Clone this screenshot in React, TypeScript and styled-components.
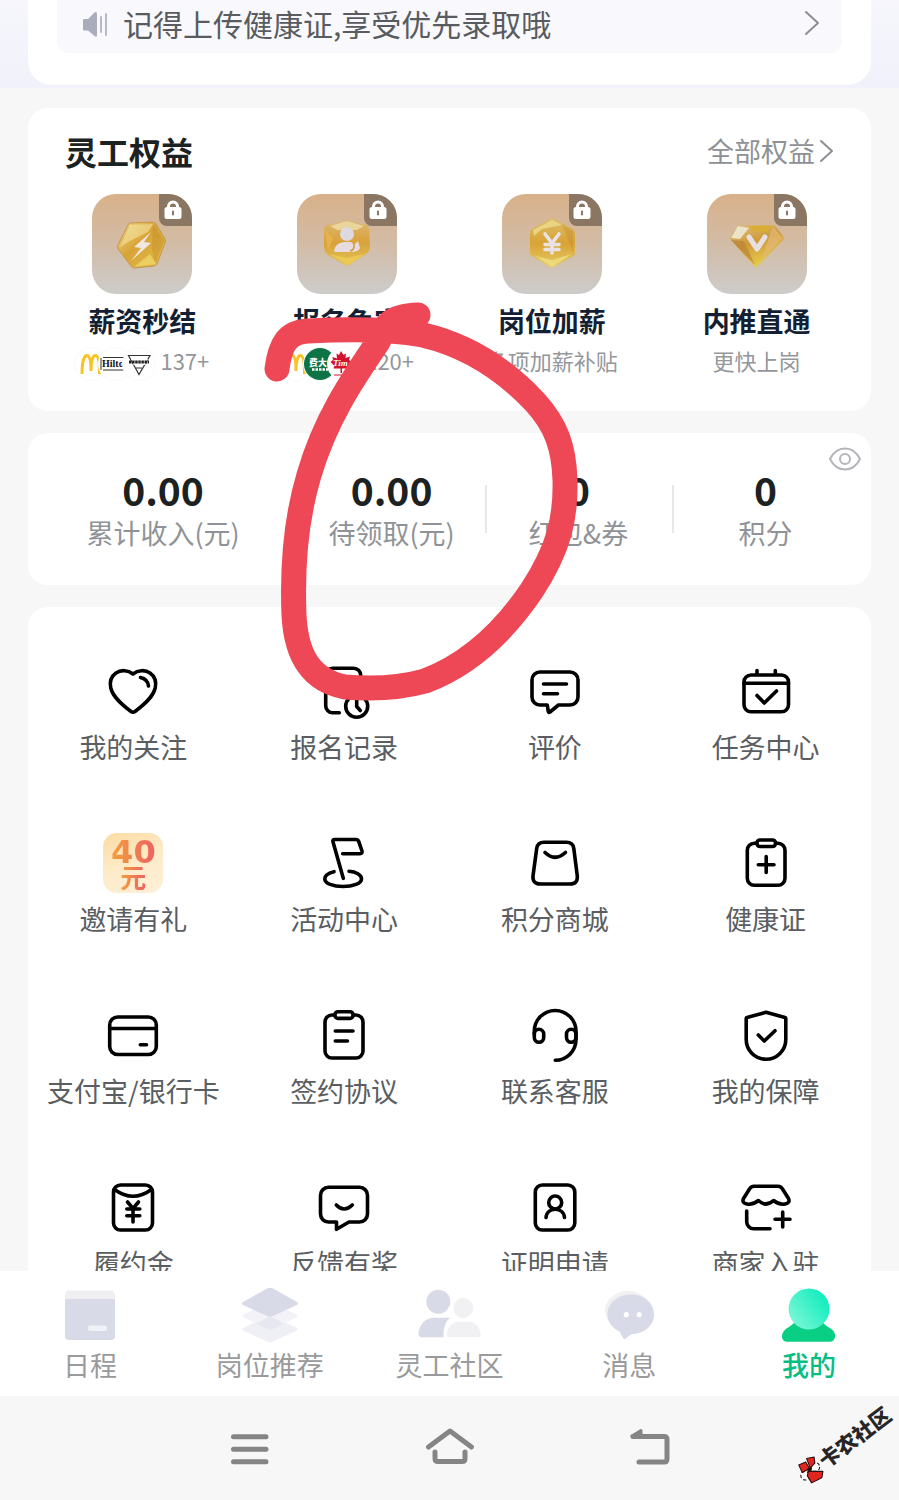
import React from "react";
import styled, { createGlobalStyle } from "styled-components";

const GlobalStyle = createGlobalStyle`
  *, *::before, *::after { box-sizing: border-box; }
  body {
    margin: 0;
    background: #f7f7f7;
    color: #1c2122;
    font-family: "Noto Sans CJK SC", "Noto Sans", sans-serif;
  }
  button {
    margin: 0;
    padding: 0;
    border: 0;
    background: none;
    color: inherit;
    font: inherit;
    cursor: pointer;
  }
  a { color: inherit; text-decoration: none; }
  h2, h3, p, ul, dl, dd { margin: 0; padding: 0; }
  ul { list-style: none; }
  svg { display: block; flex: none; }
`;

const Shell = styled.div`
  display: flex;
  flex-direction: column;
  height: 100vh;
`;

const Content = styled.main`
  position: relative;
  flex: 1;
  min-height: 0;
  overflow-x: hidden;
  overflow-y: auto;
  scrollbar-width: none;
`;

const Hero = styled.header`
  padding: 0 28px 3px;
  background: linear-gradient(#f6f6fc, #f1f1fb);
`;

const HeroCard = styled.div`
  padding: 0 29px 32px;
  border-radius: 0 0 24px 24px;
  background: #fff;
`;

const Notice = styled.a`
  display: flex;
  align-items: center;
  gap: 12px;
  height: 53px;
  padding: 0 22px 8px;
  border-radius: 0 0 12px 12px;
  background: #f9f9fd;
  color: #585c60;
  font-size: 30px;
  line-height: 40px;
`;

const NoticeText = styled.span`
  flex: 1;
  white-space: nowrap;
`;

const Cards = styled.div`
  display: flex;
  flex-direction: column;
  gap: 22px;
  padding: 20px 28px 0;
`;

const Card = styled.section`
  position: relative;
  border-radius: 20px;
  background: #fff;
`;

const BenefitsCard = styled(Card)`
  padding: 20px 12px 31px;
`;

const CardHeader = styled.div`
  display: flex;
  align-items: center;
  justify-content: space-between;
  height: 46px;
  margin-bottom: 20px;
  padding: 0 25px;
`;

const CardTitle = styled.h2`
  font-size: 32px;
  line-height: 46px;
  font-weight: 700;
`;

const MoreLink = styled.a`
  display: flex;
  align-items: center;
  gap: 4px;
  color: #8d9195;
  font-size: 27px;
  line-height: 36px;
`;

const BenefitList = styled.ul`
  display: grid;
  grid-template-columns: repeat(4, 1fr);
`;

const Benefit = styled.li`
  display: flex;
  flex-direction: column;
  align-items: center;
`;

const BenefitTile = styled.div`
  position: relative;
  width: 100px;
  height: 100px;
  border-radius: 24px;
  overflow: hidden;
  background: linear-gradient(#d8b189, #d2bca6 50%, #cdccca);
`;

const LockBadge = styled.span`
  position: absolute;
  top: 0;
  right: 0;
  display: flex;
  align-items: center;
  justify-content: center;
  width: 33px;
  height: 32px;
  padding-right: 6px;
  border-bottom-left-radius: 8px;
  background: #8a7662;
`;

const BenefitName = styled.h3`
  margin: 9px 0 5px;
  color: #141f33;
  font-size: 27px;
  line-height: 36px;
  font-weight: 700;
`;

const BenefitNote = styled.div`
  display: flex;
  align-items: flex-start;
  gap: 5px;
  height: 36px;
  color: #94979b;
  font-size: 22px;
  line-height: 32px;
  white-space: nowrap;
`;

const BrandStack = styled.span`
  display: flex;
  padding-top: 4px;
`;

const BrandDot = styled.span<{ $bg?: string }>`
  display: block;
  width: 32px;
  height: 32px;
  border-radius: 50%;
  overflow: hidden;
  background: ${(p) => p.$bg ?? "#fff"};
  box-shadow: 0 0 0 1px #fafafa;

  & + & {
    margin-left: -8px;
  }
`;

const StatsCard = styled(Card)`
  padding: 34px 12px 34px 0;
`;

const StatList = styled.ul`
  display: grid;
  grid-template-columns: 13fr 9fr 9fr 9fr;
`;

const Stat = styled.li<{ $divided?: boolean }>`
  display: flex;
  flex-direction: column;
  align-items: center;
  gap: 4px;
  background: ${(p) =>
    p.$divided
      ? "linear-gradient(#e8e8ea, #e8e8ea) left center / 2px 48px no-repeat"
      : "none"};
`;

const StatValue = styled.strong`
  font-size: 39px;
  line-height: 44px;
  font-weight: 700;
`;

const StatLabel = styled.span`
  color: #8f9397;
  font-size: 27px;
  line-height: 36px;
`;

const EyeButton = styled.button`
  position: absolute;
  top: 12px;
  right: 9px;
`;

const MenuCard = styled(Card)`
  padding: 54px 0 60px;
`;

const MenuGrid = styled.ul`
  display: grid;
  grid-template-columns: repeat(4, 1fr);
  row-gap: 68px;
`;

const MenuItem = styled.button`
  display: flex;
  flex-direction: column;
  align-items: center;
  gap: 8px;
  width: 100%;
  color: #5a5e62;
  font-size: 27px;
  line-height: 36px;
  white-space: nowrap;
`;

const LineIcon = styled.svg`
  width: 60px;
  height: 60px;
  fill: none;
  stroke: #000;
  stroke-width: 3.6;
  stroke-linecap: round;
  stroke-linejoin: round;
`;

const RewardTile = styled.span`
  display: flex;
  flex-direction: column;
  align-items: center;
  justify-content: center;
  width: 60px;
  height: 60px;
  padding-top: 4px;
  border-radius: 14px;
  background: linear-gradient(160deg, #fbdca4, #fdeccb 55%, #fdf0d8);
`;

const RewardText = styled.span<{ $size: number; $line: number }>`
  background: linear-gradient(90deg, #f2a13c, #ee5f63);
  background-clip: text;
  color: transparent;
  font-family: "DejaVu Sans", "Noto Sans CJK SC", sans-serif;
  font-size: ${(p) => p.$size}px;
  line-height: ${(p) => p.$line}px;
  font-weight: 700;
`;

const MarkerStroke = styled.svg`
  position: absolute;
  top: 0;
  left: 0;
  width: 100%;
  height: auto;
  pointer-events: none;
  fill: none;
  stroke: #ee4856;
  stroke-width: 25;
  stroke-linecap: round;
  stroke-linejoin: round;
`;

const TabBar = styled.nav`
  display: grid;
  grid-template-columns: repeat(5, 1fr);
  flex: none;
  height: 125px;
  padding-top: 14px;
  background: #fff;
`;

const Tab = styled.button<{ $active?: boolean }>`
  display: flex;
  flex-direction: column;
  align-items: center;
  gap: 4px;
  color: ${(p) => (p.$active ? "#06bd83" : "#999a9b")};
  font-size: 27px;
  line-height: 32px;
  font-weight: ${(p) => (p.$active ? 500 : 400)};
`;

const SystemBar = styled.footer`
  position: relative;
  display: flex;
  align-items: center;
  justify-content: center;
  gap: 140px;
  flex: none;
  height: 104px;
  background: #f7f7f7;
`;

const SystemIcon = styled.svg`
  width: 60px;
  height: 60px;
  fill: none;
  stroke: #858585;
  stroke-width: 5;
  stroke-linecap: round;
  stroke-linejoin: round;
`;

const Watermark = styled.div`
  position: absolute;
  top: 35px;
  right: 0;
  display: flex;
  align-items: center;
  transform: rotate(-37deg);
  color: #262626;
  font-size: 21px;
  line-height: 26px;
  font-weight: 900;
`;

const Bolt = () => (
  <svg width="100" height="100" viewBox="0 0 100 100">
    <defs>
      <linearGradient id="boltGold" x1="0" y1="0" x2="1" y2="1">
        <stop offset="0" stopColor="#f3dc8c" />
        <stop offset="0.45" stopColor="#d8a336" />
        <stop offset="1" stopColor="#e2bd4c" />
      </linearGradient>
    </defs>
    <path d="M38 29L61 28Q63 28 64 30L73 45Q74 47 73 49L65 70Q64 72 62 72L42 74Q40 74 39 72L26 55Q25 53 26 51L36 31Q37 29 38 29Z" fill="url(#boltGold)" stroke="#c39a4e" strokeWidth="1" />
    <path d="M38 31L61 30L56 38L36 48L28 53Z" fill="#f4e8a6" opacity=".55" />
    <path d="M61 30L72 47L63 70L60 55Z" fill="#b98222" opacity=".3" />
    <path d="M42 73L58 60L64 70Z" fill="#f5e275" opacity=".6" />
    <path d="M59 38L42 53L49 54L39 67L59 49L52 48Z" fill="#f1e6e2" />
  </svg>
);

const Referral = () => (
  <svg width="100" height="100" viewBox="0 0 100 100">
    <defs>
      <linearGradient id="refGold" x1="0" y1="0" x2="0" y2="1">
        <stop offset="0" stopColor="#dcb774" />
        <stop offset="0.5" stopColor="#d9a23a" />
        <stop offset="1" stopColor="#e3c458" />
      </linearGradient>
    </defs>
    <path d="M30 31Q40 30 50 26Q60 30 70 31Q72 32 72 35L73 52Q73 57 69 60L52 71Q50 72 48 71L31 61Q27 58 27 53V35Q27 32 30 31Z" fill="url(#refGold)" />
    <path d="M33 32L50 27L67 32L60 36L40 36Z" fill="#ecdfa6" opacity=".8" />
    <path d="M32 60L50 64L68 60L51 71Z" fill="#edcf55" opacity=".75" />
    <path d="M28 36L36 44L31 57Z" fill="#e7b24b" />
    <circle cx="50" cy="40" r="7" fill="#ded8e0" />
    <path d="M37 57Q38 49 47 48H54L57 51L61 47L63 54Q61 58 55 58H39Q37 58 37 57Z" fill="#e6dce0" />
    <path d="M53 57Q58 56 57 50" fill="none" stroke="#d39a44" strokeWidth="1.5" />
  </svg>
);

const YuanCoin = () => (
  <svg width="100" height="100" viewBox="0 0 100 100">
    <defs>
      <linearGradient id="coinGold" x1="0" y1="0" x2="0" y2="1">
        <stop offset="0" stopColor="#ddbd6a" />
        <stop offset="0.5" stopColor="#d8a335" />
        <stop offset="1" stopColor="#e6cb62" />
      </linearGradient>
    </defs>
    <path d="M48 25Q50 24 52 25L71 35Q73 37 73 39V59Q73 61 71 62L52 73Q50 74 48 73L30 62Q28 61 28 59V39Q28 37 30 35Z" fill="url(#coinGold)" />
    <path d="M31 36L50 26L60 31L40 35L32 42Z" fill="#ecdc8f" opacity=".8" />
    <path d="M33 62L50 66L70 60L50 73Z" fill="#efdf83" opacity=".8" />
    <path d="M60 30L71 37V58L66 46Z" fill="#c1862b" opacity=".35" />
    <path d="M43 40L50 49L57 40M50 49V59M43 50.500H57M43 55.500H57" fill="none" stroke="#e8e2e4" strokeWidth="3.6" strokeLinecap="round" />
  </svg>
);

const Diamond = () => (
  <svg width="100" height="100" viewBox="0 0 100 100">
    <defs>
      <linearGradient id="gemGold" x1="0" y1="0" x2="0.4" y2="1">
        <stop offset="0" stopColor="#dfc084" />
        <stop offset="0.5" stopColor="#cf9a38" />
        <stop offset="1" stopColor="#e5cb4d" />
      </linearGradient>
    </defs>
    <path d="M32 31H66Q68 31 69 33L76 42Q77 44 76 46L51 72Q49 74 47 72L24 46Q22 44 24 42L30 33Q31 31 32 31Z" fill="url(#gemGold)" />
    <path d="M31 32L42 34L33 45L24 44Z" fill="#ece4c8" />
    <path d="M42 32L64 32L60 38L44 37Z" fill="#d9ae35" />
    <path d="M24 46L37 47L48 71Z" fill="#b98035" opacity=".6" />
    <path d="M66 33L76 44L55 66L62 43Z" fill="#e4b979" opacity=".7" />
    <path d="M42 43L50 55L58 43" fill="none" stroke="#e7dfe2" strokeWidth="5" strokeLinecap="round" strokeLinejoin="round" />
  </svg>
);

const Lock = () => (
  <svg width="20" height="20" viewBox="0 0 20 20">
    <path d="M5.500 8.500V6.500a4.500 4.500 0 0 1 9 0V8.500" fill="none" stroke="#fff" strokeWidth="3" />
    <rect x="1.500" y="7" width="17" height="12" rx="2.500" fill="#fff" />
    <path d="M10 11.500v3" stroke="#8a7662" strokeWidth="2" strokeLinecap="round" />
  </svg>
);

const Arches = () => (
  <svg width="32" height="32" viewBox="0 0 32 32">
    <path d="M7 26C7 14 9 7.500 12 7.500S16 14 16 23M16 23C16 14 17.500 7.500 20.500 7.500S24.500 14 24.500 26" fill="none" stroke="#f7c325" strokeWidth="3" />
  </svg>
);

const HotelLogo = () => (
  <svg width="32" height="32" viewBox="0 0 32 32">
    <path d="M2 10V22M4 9.500H30M4 22H30" stroke="#333" strokeWidth="1" fill="none" />
    <text x="3" y="19" fontFamily="Liberation Serif, serif" fontSize="10" fontWeight="700" fill="#111">
      Hilto
    </text>
  </svg>
);

const TriangleLogo = () => (
  <svg width="32" height="32" viewBox="0 0 32 32">
    <path d="M5.500 7.500H27L16 26.500Z" fill="none" stroke="#333" strokeWidth="1.200" />
    <path d="M8 11H25L22 17H10.500Z" fill="#fff" />
    <path d="M6 14H26" stroke="#222" strokeWidth="3" strokeDasharray="2.500 .6" />
    <path d="M13 20H19" stroke="#333" strokeWidth="1" />
  </svg>
);

const ChefLogo = () => (
  <svg width="32" height="32" viewBox="0 0 32 32">
    <text x="5" y="18" fontFamily="Noto Sans CJK SC, sans-serif" fontSize="9" fontWeight="900" fill="#fff">
      费大
    </text>
    <path d="M8 21.500H24" stroke="#fff" strokeWidth="2.400" strokeDasharray="2.500 1" />
  </svg>
);

const MapleLogo = () => (
  <svg width="32" height="32" viewBox="0 0 32 32">
    <path d="M13 3L15.500 7L18 5.500L17.500 10L22 8.500L21 12L24 14L20 18L20.500 20.500H14V25H12.500V20.500H5.500L6.500 18L2.500 14L5 12L4.500 9L9 10.500L8.500 5.500L11 7Z" fill="#d3122e" />
    <text x="5" y="18" fontFamily="Liberation Serif, serif" fontSize="9" fontStyle="italic" fontWeight="700" fill="#fff">
      Tim
    </text>
    <path d="M6 27H20" stroke="#d3122e" strokeWidth="1" />
  </svg>
);

const Chevron = ({ width, height, weight }: { width: number; height: number; weight: number }) => (
  <svg width={width} height={height} viewBox={`0 0 ${width} ${height}`} fill="none" stroke="#8b8e93" strokeWidth={weight} strokeLinecap="round" strokeLinejoin="round">
    <path d={`M2 2L${width - 2} ${height / 2}L2 ${height - 2}`} />
  </svg>
);

const benefits: {
  name: string;
  art: React.ReactNode;
  note: string;
  brands?: { art: React.ReactNode; bg?: string }[];
}[] = [
  {
    name: "薪资秒结",
    art: <Bolt />,
    note: "137+",
    brands: [{ art: <Arches /> }, { art: <HotelLogo /> }, { art: <TriangleLogo /> }],
  },
  {
    name: "报名免审",
    art: <Referral />,
    note: "120+",
    brands: [{ art: <Arches /> }, { art: <ChefLogo />, bg: "#0d7446" }, { art: <MapleLogo /> }],
  },
  { name: "岗位加薪", art: <YuanCoin />, note: "多项加薪补贴" },
  { name: "内推直通", art: <Diamond />, note: "更快上岗" },
];

const stats = [
  { value: "0.00", label: "累计收入(元)" },
  { value: "0.00", label: "待领取(元)" },
  { value: "0", label: "红包&券", divided: true },
  { value: "0", label: "积分", divided: true },
];

const menu: { label: string; icon: React.ReactNode }[] = [
  {
    label: "我的关注",
    icon: (
      <LineIcon viewBox="0 0 60 60">
        <path d="M30 13C25 9 18 8.500 13 12C8 15.500 6.500 21 7.800 27C10 36 18 43 28 50.500Q30 52 32 50.500C42 43 50 36 52.200 27C53.500 21 52 15.500 47 12C42 8.500 35 9 30 13Z" />
        <path d="M37.500 16.500C42 17.500 45 20.500 45.500 25" />
      </LineIcon>
    ),
  },
  {
    label: "报名记录",
    icon: (
      <LineIcon viewBox="0 0 60 60">
        <path d="M25.300 51.700H18.700a7 7 0 0 1-7-7V14.300a7 7 0 0 1 7-7H39.700a7 7 0 0 1 7 7V27" />
        <circle cx="42.700" cy="45.300" r="11" />
        <path d="M42.700 38.500V45.500L46.300 49.500" />
      </LineIcon>
    ),
  },
  {
    label: "评价",
    icon: (
      <LineIcon viewBox="0 0 60 60">
        <path d="M15 11H45a8 8 0 0 1 8 8V36a8 8 0 0 1-8 8H33.500L25 51Q23.500 52 23.300 50.500L22.300 44H15a8 8 0 0 1-8-8V19a8 8 0 0 1 8-8Z" />
        <path d="M18.500 23H41.500M18.500 32.700H32.500" />
      </LineIcon>
    ),
  },
  {
    label: "任务中心",
    icon: (
      <LineIcon viewBox="0 0 60 60">
        <rect x="8" y="14" width="44.500" height="36.700" rx="7" />
        <path d="M8 22.300H52.500M21 9.500V13M39.300 9.500V13M21 34.500L28.300 42L40.500 30" />
      </LineIcon>
    ),
  },
  {
    label: "邀请有礼",
    icon: (
      <RewardTile>
        <RewardText $size={32} $line={28}>40</RewardText>
        <RewardText $size={26} $line={26}>元</RewardText>
      </RewardTile>
    ),
  },
  {
    label: "活动中心",
    icon: (
      <LineIcon viewBox="0 0 60 60">
        <path d="M29.300 45.300L18.900 8.500Q18.500 6.500 20.500 6.500H42Q44 6.500 44.700 8.300L48 18Q48.500 20.700 46 20.700H28.700" />
        <path d="M20 38.700C14 40 10.800 42.500 10.800 46C10.800 50.500 19 53.500 29 53.500S47.500 50.500 47.500 46C47.500 42 42 38.700 35 38.300" />
      </LineIcon>
    ),
  },
  {
    label: "积分商城",
    icon: (
      <LineIcon viewBox="0 0 60 60">
        <path d="M19 9.300H41.500Q48 9.300 48.800 15.500L52.300 43Q53 51 45 51H15.500Q7.300 51 8 43L11.700 15.500Q12.500 9.300 19 9.300Z" />
        <path d="M20 19.500Q30 29 40.500 19.500" />
      </LineIcon>
    ),
  },
  {
    label: "健康证",
    icon: (
      <LineIcon viewBox="0 0 60 60">
        <path d="M20.500 10.300H18.300a7 7 0 0 0-7 7V45.300a7 7 0 0 0 7 7H42a7 7 0 0 0 7-7V17.300a7 7 0 0 0-7-7H40" />
        <rect x="21" y="7" width="18.500" height="6.500" rx="3" />
        <path d="M22.300 31.700H38M30.200 23.500V39.500" />
      </LineIcon>
    ),
  },
  {
    label: "支付宝/银行卡",
    icon: (
      <LineIcon viewBox="0 0 60 60">
        <rect x="6.700" y="12" width="46.600" height="37.500" rx="8" />
        <path d="M7 23.500H53M37.300 39.700H43.500" />
      </LineIcon>
    ),
  },
  {
    label: "签约协议",
    icon: (
      <LineIcon viewBox="0 0 60 60">
        <path d="M20.500 10H18a7 7 0 0 0-7 7V46a7 7 0 0 0 7 7H42a7 7 0 0 0 7-7V17a7 7 0 0 0-7-7H39.500" />
        <rect x="21" y="6.700" width="18" height="6.700" rx="3" />
        <path d="M21.300 26H39M21.300 36H33.500" />
      </LineIcon>
    ),
  },
  {
    label: "联系客服",
    icon: (
      <LineIcon viewBox="0 0 60 60">
        <path d="M9.300 29V26.300A20.800 20.800 0 0 1 51 26.300V34.500A20.800 20.800 0 0 1 30.300 55.300" />
        <rect x="9.300" y="24.300" width="9.400" height="13" rx="4.700" />
        <rect x="41.500" y="24.300" width="9.400" height="13" rx="4.700" />
      </LineIcon>
    ),
  },
  {
    label: "我的保障",
    icon: (
      <LineIcon viewBox="0 0 60 60">
        <path d="M30 7.300L49 12.500Q49.800 12.700 49.800 13.500V34.500A19.800 19.800 0 0 1 10.200 34.500V13.500Q10.200 12.700 11 12.500Z" />
        <path d="M22.300 30L28.300 36L39 25.700" />
      </LineIcon>
    ),
  },
  {
    label: "履约金",
    icon: (
      <LineIcon viewBox="0 0 60 60">
        <rect x="10.500" y="8" width="39" height="45" rx="7" />
        <path d="M11.500 12.500Q30 26 48.500 12.500M24.500 25L30 31.500L35.500 25M30 31.500V45M23.800 32H36.800M23.800 38.700H36.800" />
      </LineIcon>
    ),
  },
  {
    label: "反馈有奖",
    icon: (
      <LineIcon viewBox="0 0 60 60">
        <path d="M14.500 10.300H45.500a8 8 0 0 1 8 8V37a8 8 0 0 1-8 8H35L22.500 52.300V45H14.500a8 8 0 0 1-8-8V18.300a8 8 0 0 1 8-8Z" />
        <path d="M22.300 28Q30 36 38.300 28" />
      </LineIcon>
    ),
  },
  {
    label: "证明申请",
    icon: (
      <LineIcon viewBox="0 0 60 60">
        <rect x="10.300" y="8" width="39.500" height="45" rx="7" />
        <circle cx="30.200" cy="25.500" r="6.500" />
        <path d="M21 40.500C22 29.500 38.500 29.500 39.500 40.500" />
      </LineIcon>
    ),
  },
  {
    label: "商家入驻",
    icon: (
      <LineIcon viewBox="0 0 60 60">
        <path d="M18 9.300H42Q45 9.300 46.500 12L52.500 21.500Q54.500 26 49 27Q43 28 37.500 23.500Q30 30.500 22.500 23.500Q17 28 11 27Q5.500 26 7.500 21.500L13.500 12Q15 9.300 18 9.300Z" />
        <path d="M10.700 34V44.700a7 7 0 0 0 7 7H34M39 42.300H54M46.700 35V50" />
      </LineIcon>
    ),
  },
];

const tabs: { label: string; active?: boolean; icon: React.ReactNode }[] = [
  {
    label: "日程",
    icon: (
      <svg width="64" height="60" viewBox="0 0 64 60">
        <path d="M7 15V10a4.500 4.500 0 0 1 4.500-4.500H52.500a4.500 4.500 0 0 1 4.500 4.500V15Z" fill="#efeff1" />
        <path d="M7 14H57V51a4 4 0 0 1-4 4H11a4 4 0 0 1-4-4Z" fill="#d9dae7" />
        <rect x="30" y="40.500" width="19" height="5.500" rx="2" fill="#f1f1f8" />
      </svg>
    ),
  },
  {
    label: "岗位推荐",
    icon: (
      <svg width="64" height="60" viewBox="0 0 64 60">
        <path d="M5 43Q3.500 44 5 45.500L30 57Q32 58 34 57L59 45.500Q60.500 44 59 43L34 31Q32 30 30 31Z" fill="#efeff6" />
        <path d="M5 29.500Q3.500 31 5 32L30 44.500Q32 45.500 34 44.500L59 32Q60.500 31 59 29.500L34 18H30Z" fill="#f2f2f8" />
        <path d="M18 38.500L32 31.500L46 38.500L34 44.500Q32 45.500 30 44.500Z" fill="#e7e7f2" />
        <path d="M5 17Q3 18.500 5 20L29 31Q32 32.500 35 31L59 20Q61 18.500 59 17L35 3.500Q32 2 29 3.500Z" fill="#d9dae7" />
      </svg>
    ),
  },
  {
    label: "灵工社区",
    icon: (
      <svg width="64" height="60" viewBox="0 0 64 60">
        <circle cx="21.300" cy="16.700" r="12" fill="#d9dae7" />
        <path d="M5 52.300Q1 52 1.500 48C2.500 39 9 32.700 17 32.700H33C28 37 26.500 43 26.500 52.300Z" fill="#d9dae7" />
        <circle cx="46.300" cy="23" r="10" fill="#f1f1f3" />
        <path d="M33 52.300Q29.500 52 30 48.500C31 41 36 36.700 42 36.700H51C57.500 36.700 62.500 41 63.700 48.500Q64 52 60.500 52.300Z" fill="#f1f1f3" />
      </svg>
    ),
  },
  {
    label: "消息",
    icon: (
      <svg width="64" height="60" viewBox="0 0 64 60">
        <ellipse cx="31" cy="25.500" rx="23" ry="19.500" fill="#f1f1f3" />
        <path d="M34 9.500C47 9.500 57 18 57 29.500S47 49 34.500 49L28.500 53.500Q27 54.500 26 53L22.500 46.500C15 43 10.500 37 10.500 29.500C10.500 18 21 9.500 34 9.500Z" fill="#d9dae7" />
        <circle cx="29.300" cy="29.700" r="2.600" fill="#fff" />
        <circle cx="42.300" cy="29.700" r="2.600" fill="#fff" />
      </svg>
    ),
  },
  {
    label: "我的",
    active: true,
    icon: (
      <svg width="64" height="60" viewBox="0 0 64 60">
        <defs>
          <linearGradient id="mineHead" x1="0" y1="0.900" x2="1" y2="0.200">
            <stop offset="0" stopColor="#86f7d8" />
            <stop offset="1" stopColor="#08edbd" />
          </linearGradient>
        </defs>
        <path d="M17 38H46C50 42 54 43 56.500 46C60 51 57.500 56.700 53 56.700H10C5 56.700 3.500 51 6.500 46.500C9 43 13 42 17 38Z" fill="#08cf84" />
        <circle cx="32" cy="24" r="20.500" fill="url(#mineHead)" />
      </svg>
    ),
  },
];

export default function App() {
  return (
    <>
      <GlobalStyle />
      <Shell>
        <Content>
          <Hero>
            <HeroCard>
              <Notice href="#health">
                <svg width="32" height="32" viewBox="0 0 32 32">
                  <path d="M4 13Q4 12 5 12H9L15.500 5.500Q18 4 18 7V28Q18 31 15.500 29L9 23.500H5Q4 23.500 4 22.500Z" fill="#a9adbb" />
                  <path d="M22 10V25M27 7V28" stroke="#b6b9c6" strokeWidth="2" strokeLinecap="round" />
                </svg>
                <NoticeText>记得上传健康证,享受优先录取哦</NoticeText>
                <Chevron width={16} height={26} weight={2} />
              </Notice>
            </HeroCard>
          </Hero>

          <Cards>
            <BenefitsCard>
              <CardHeader>
                <CardTitle>灵工权益</CardTitle>
                <MoreLink href="#benefits">
                  全部权益
                  <Chevron width={15} height={24} weight={2} />
                </MoreLink>
              </CardHeader>
              <BenefitList>
                {benefits.map((b) => (
                  <Benefit key={b.name}>
                    <BenefitTile>
                      {b.art}
                      <LockBadge>
                        <Lock />
                      </LockBadge>
                    </BenefitTile>
                    <BenefitName>{b.name}</BenefitName>
                    <BenefitNote>
                      {b.brands && (
                        <BrandStack>
                          {b.brands.map((brand, i) => (
                            <BrandDot key={i} $bg={brand.bg}>
                              {brand.art}
                            </BrandDot>
                          ))}
                        </BrandStack>
                      )}
                      {b.note}
                    </BenefitNote>
                  </Benefit>
                ))}
              </BenefitList>
            </BenefitsCard>

            <StatsCard>
              <StatList>
                {stats.map((s) => (
                  <Stat key={s.label} $divided={s.divided}>
                    <StatValue>{s.value}</StatValue>
                    <StatLabel>{s.label}</StatLabel>
                  </Stat>
                ))}
              </StatList>
              <EyeButton aria-label="隐藏金额">
                <svg width="34" height="28" viewBox="0 0 34 28" fill="none" stroke="#b3b5bb" strokeWidth="2">
                  <path d="M2 14C5.500 7 11 3.500 17 3.500S28.500 7 32 14C28.500 21 23 24.500 17 24.500S5.500 21 2 14Z" />
                  <circle cx="17" cy="14" r="5" />
                </svg>
              </EyeButton>
            </StatsCard>

            <MenuCard>
              <MenuGrid>
                {menu.map((m) => (
                  <li key={m.label}>
                    <MenuItem>
                      {m.icon}
                      <span>{m.label}</span>
                    </MenuItem>
                  </li>
                ))}
              </MenuGrid>
            </MenuCard>
          </Cards>

          <MarkerStroke viewBox="0 0 899 1271" aria-hidden="true">
            <path d="M277 369C280 345 287 332 308 331C345 329 390 329 423 335C470 346 505 370 535 402C556 425 564 447 565 480C566 520 558 550 532 590C505 630 470 664 425 681C400 688 370 689 345 687C310 680 296 655 294 615C292 565 297 515 309 475C325 420 352 380 378 342C386 324 390 316 418 315" />
          </MarkerStroke>
        </Content>

        <TabBar>
          {tabs.map((t) => (
            <Tab key={t.label} $active={t.active} aria-current={t.active ? "page" : undefined}>
              {t.icon}
              <span>{t.label}</span>
            </Tab>
          ))}
        </TabBar>

        <SystemBar>
          <button aria-label="菜单">
            <SystemIcon viewBox="0 0 60 60">
              <path d="M13.500 18.700H46M13.500 31.300H46M13.500 43.700H46" />
            </SystemIcon>
          </button>
          <button aria-label="主页">
            <SystemIcon viewBox="0 0 60 60">
              <path d="M8.500 29L30 13L51.500 29M15 34V40.500Q15 43.500 18 43.500H42Q45 43.500 45 40.500V34" />
            </SystemIcon>
          </button>
          <button aria-label="返回">
            <SystemIcon viewBox="0 0 60 60">
              <path d="M13 18.500H44Q47 18.500 47 21.500V41Q47 44 44 44H19" />
              <path d="M12 18L21 12.500V18Z" strokeWidth="3" fill="#858585" />
            </SystemIcon>
          </button>
          <Watermark>
            <svg width="28" height="28" viewBox="0 0 26 26">
              <g transform="rotate(37 13 13)" stroke="#2a1010" strokeWidth="1" strokeLinejoin="round">
                <circle cx="9" cy="18" r="4" fill="#fff" strokeDasharray="3 2" />
                <circle cx="18.500" cy="10" r="4" fill="#fff" strokeDasharray="3 2" />
                <path d="M3 8L9.500 5.300L13 11.300L6.300 15Z" fill="#e1251f" />
                <path d="M10.300 2L17.300 .7L18 6.300L13.700 11Z" fill="#e1251f" />
                <path d="M12 14L25.500 14L24.500 20L15 24.700L11 18Z" fill="#e1251f" />
                <circle cx="13" cy="12.500" r="1.600" fill="#2a1010" />
              </g>
            </svg>
            <span>卡农社区</span>
          </Watermark>
        </SystemBar>
      </Shell>
    </>
  );
}
